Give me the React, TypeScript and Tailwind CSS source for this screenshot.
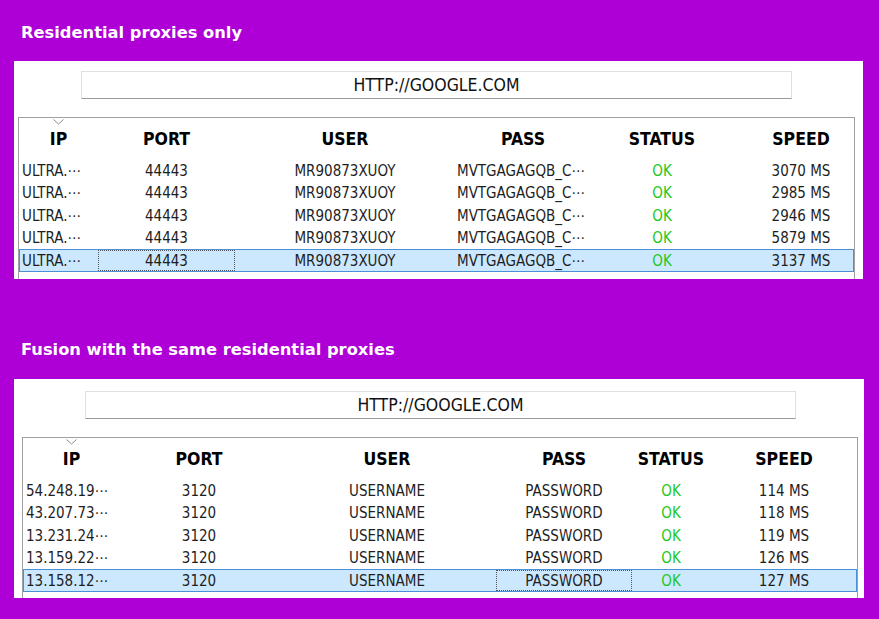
import React from 'react';

type Col = { w: number; left?: boolean };

const cols1: Col[] = [
  { w: 79, left: true },
  { w: 137 },
  { w: 220 },
  { w: 136, left: true },
  { w: 142 },
  { w: 136 },
];

const cols2: Col[] = [
  { w: 97, left: true },
  { w: 158 },
  { w: 218 },
  { w: 136 },
  { w: 78 },
  { w: 148 },
];

const heads = ['IP', 'PORT', 'USER', 'PASS', 'STATUS', 'SPEED'];

const rows1 = ['3070', '2985', '2946', '5879', '3137'].map((ms) => [
  'ULTRA.⋯',
  '44443',
  'MR90873XUOY',
  'MVTGAGAGQB_C⋯',
  'OK',
  `${ms} MS`,
]);

const rows2 = [
  ['54.248.19⋯', '114'],
  ['43.207.73⋯', '118'],
  ['13.231.24⋯', '119'],
  ['13.159.22⋯', '126'],
  ['13.158.12⋯', '127'],
].map(([ip, ms]) => [ip, '3120', 'USERNAME', 'PASSWORD', 'OK', `${ms} MS`]);

const Chevron = () => (
  <svg width="11" height="6" viewBox="0 0 11 6" className="block">
    <path d="M0.5 0.5 L5.5 5 L10.5 0.5" fill="none" stroke="#8a8a8a" strokeWidth="1" />
  </svg>
);

function ProxyTable({ cols, rows, focusCol }: { cols: Col[]; rows: string[][]; focusCol: number }) {
  return (
    <div className="border border-[#a0a0a0] border-b-0 overflow-hidden h-[170px] font-['DejaVu_Sans_Condensed',Roboto,sans-serif] [font-stretch:condensed]">
      <div className="flex h-[41px]">
        {heads.map((h, i) => (
          <div key={h} style={{ width: cols[i].w }} className="shrink-0 flex flex-col items-center">
            <div className="h-[10px] pt-[1px]">{i === 0 && <Chevron />}</div>
            <div className="text-[17.5px] font-bold leading-[22px] text-black">{h}</div>
          </div>
        ))}
      </div>
      {rows.map((r, ri) => {
        const sel = ri === rows.length - 1;
        return (
          <div
            key={ri}
            className={`flex h-[22.5px] ${sel ? 'bg-[#cce8ff] border border-[#4a90d9]' : 'border border-transparent'}`}
          >
            {r.map((c, ci) => (
              <div
                key={ci}
                style={{ width: cols[ci].w - (ci === 0 ? 1 : 0) }}
                className={`shrink-0 flex items-center pt-[1px] overflow-hidden whitespace-nowrap text-[15px] ${
                  cols[ci].left ? 'justify-start pl-[2px]' : 'justify-center'
                } ${ci === 4 ? 'text-[#22c722]' : 'text-[#1e1e1e]'} ${
                  sel && ci === focusCol ? 'border border-dotted border-[#555]' : ''
                }`}
              >
                {c}
              </div>
            ))}
          </div>
        );
      })}
    </div>
  );
}

function UrlBox() {
  return (
    <div className="h-[28px] border border-[#e0e0e0] border-b-[#9a9a9a] bg-white flex items-center justify-center pt-[1px] font-['DejaVu_Sans_Condensed',Roboto,sans-serif] [font-stretch:condensed] text-[17.5px] text-[#111]">
      HTTP://GOOGLE.COM
    </div>
  );
}

export default function App() {
  return (
    <div className="w-[879px] h-[619px] bg-[#ae00d6] overflow-hidden">
      <h2 className="pt-[21px] pl-[21px] h-[61px] font-['DejaVu_Sans',sans-serif] font-bold text-[16.3px] text-white">
        Residential proxies only
      </h2>
      <div className="ml-[14px] w-[849px] h-[218px] bg-white overflow-hidden">
        <div className="pt-[10px] pl-[67px] w-[778px]">
          <UrlBox />
        </div>
        <div className="mt-[18px] ml-[4px] w-[837px]">
          <ProxyTable cols={cols1} rows={rows1} focusCol={1} />
        </div>
      </div>
      <h2 className="h-[100px] pt-[59px] pl-[21px] font-['DejaVu_Sans',sans-serif] font-bold text-[16.3px] text-white">
        Fusion with the same residential proxies
      </h2>
      <div className="ml-[14px] w-[850px] h-[219px] bg-white overflow-hidden">
        <div className="pt-[12px] pl-[71px] w-[782px]">
          <UrlBox />
        </div>
        <div className="mt-[18px] ml-[8px] w-[836px]">
          <ProxyTable cols={cols2} rows={rows2} focusCol={3} />
        </div>
      </div>
    </div>
  );
}
